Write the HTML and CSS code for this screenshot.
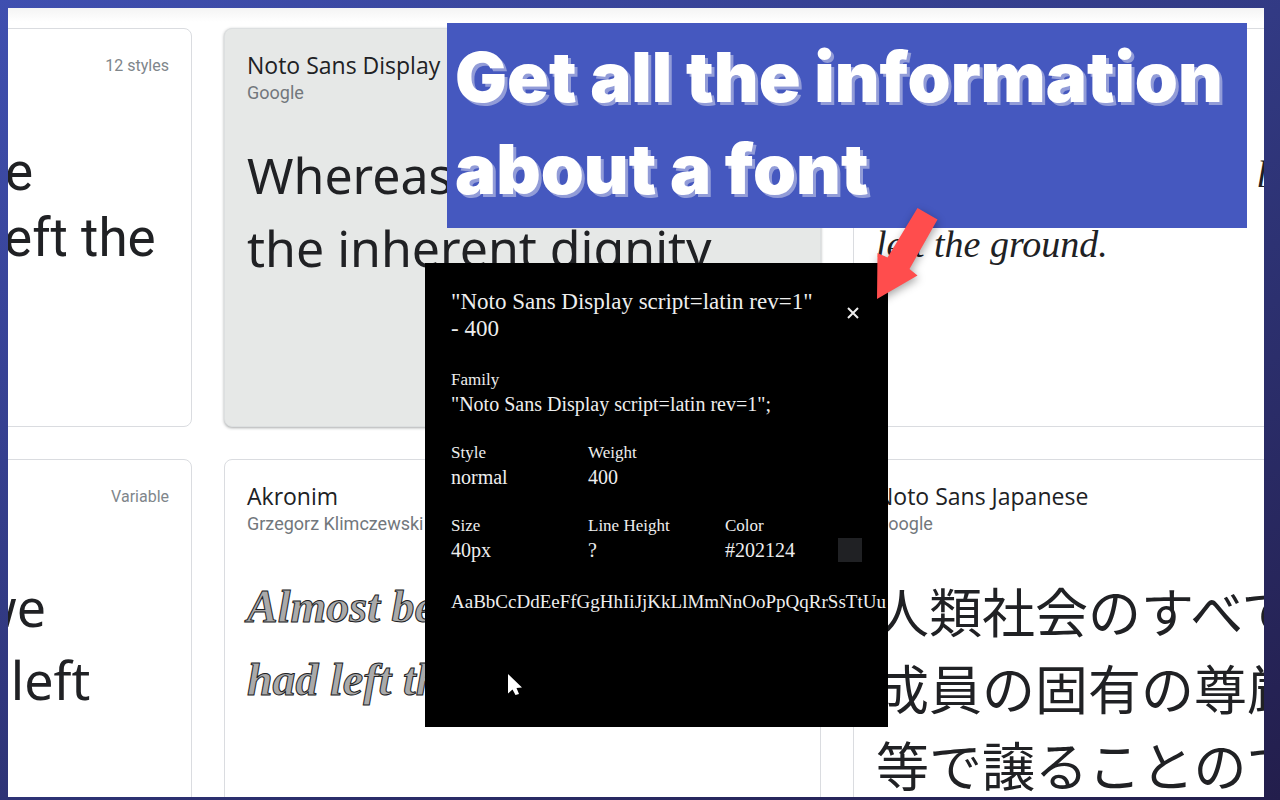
FILE: index.html
```html
<!DOCTYPE html>
<html lang="en">
<head>
<meta charset="utf-8">
<title>Get all the information about a font</title>
<link rel="stylesheet" href="styles.css">
</head>
<body>
<main class="frame">
  <div class="catalog">
    <article class="card card-left">
      <header class="card-head card-head-end"><span class="meta">12 styles</span></header>
      <p class="sample sample-roboto">Almost before we<br>knew it, we had left the</p>
    </article>
    <article class="card card-active">
      <header class="card-head"><h2 class="name">Noto Sans Display</h2><p class="maker">Google</p></header>
      <p class="sample sample-noto">Whereas<br>the inherent dignity</p>
    </article>
    <article class="card card-right">
      <header class="card-head"></header>
      <p class="sample sample-script"><span class="script-end">u l</span>left the ground.</p>
    </article>
    <article class="card card-left">
      <header class="card-head card-head-end"><span class="meta">Variable</span></header>
      <p class="sample sample-open">Almost before we<br>knew it, we had left</p>
    </article>
    <article class="card">
      <header class="card-head"><h2 class="name">Akronim</h2><p class="maker">Grzegorz Klimczewski</p></header>
      <p class="sample sample-akronim">Almost before<br>had left the</p>
    </article>
    <article class="card card-right">
      <header class="card-head"><h2 class="name">Noto Sans Japanese</h2><p class="maker">Google</p></header>
      <p class="sample sample-jp" lang="ja">人類社会のすべて<br>成員の固有の尊厳<br>等で譲ることので</p>
    </article>
  </div>
</main>

<h1 class="banner">Get all the information about a font</h1>

<section class="popup" aria-label="Font details">
  <header class="popup-head">
    <h2 class="popup-title">"Noto Sans Display script=latin rev=1" <span class="keep">- 400</span></h2>
    <button class="close" type="button" aria-label="Close">
      <svg width="12" height="12" viewBox="0 0 12 12"><path d="M1 1 11 11M11 1 1 11" stroke="#eee" stroke-width="2" fill="none"/></svg>
    </button>
  </header>
  <dl class="facts">
    <div class="fact fact-wide"><dt>Family</dt><dd>"Noto Sans Display script=latin rev=1";</dd></div>
    <div class="fact"><dt>Style</dt><dd>normal</dd></div>
    <div class="fact"><dt>Weight</dt><dd>400</dd></div>
    <div class="fact fact-first"><dt>Size</dt><dd>40px</dd></div>
    <div class="fact"><dt>Line Height</dt><dd>?</dd></div>
    <div class="fact"><dt>Color</dt><dd class="color">#202124<span class="swatch"></span></dd></div>
  </dl>
  <p class="alphabet">AaBbCcDdEeFfGgHhIiJjKkLlMmNnOoPpQqRrSsTtUu</p>
</section>

<svg class="arrow" width="90" height="110" viewBox="0 0 90 110" aria-hidden="true">
  <path d="M57.500 8 77.500 19.500 49.500 69 57.500 75.500 17 99 17.500 53 27.500 57.500Z" fill="#ff4d4d"/>
</svg>
<svg class="cursor" width="16" height="24" viewBox="0 0 16 24" aria-hidden="true">
  <path d="M1 1V20.500L5.500 16.500 8.500 22 12 21 9.500 15 15 14.500Z" fill="#fff"/>
</svg>
</body>
</html>
```

FILE: styles.css
```css
* { box-sizing: border-box; }
html, body { height: 100%; }
body {
  margin: 0;
  overflow: hidden;
  position: relative;
  font-family: Roboto, "Liberation Sans", sans-serif;
  color: #202124;
  background: linear-gradient(155deg, #3f4fb0 0%, #2d3273 60%, #231e4c 100%);
}
h1, h2, p, dl, dd { margin: 0; font-weight: 400; }

.frame { height: 100%; padding: 8px 16px 3px 8px; }
.catalog {
  height: 100%;
  overflow: hidden;
  padding-top: 20px;
  background: linear-gradient(#f4f4f4, #fff 14px);
  display: grid;
  grid-template-columns: minmax(0, 184fr) minmax(0, 597fr) minmax(0, 411fr);
  grid-auto-rows: 399px;
  gap: 32px;
}
.card {
  min-width: 0;
  padding: 20px 22px;
  border: 1px solid #dadce0;
  border-radius: 8px;
  background: #fff;
}
.card-left { width: 597px; justify-self: end; }
.card-right { width: 597px; }
.card-active {
  background: #e6e8e7;
  border-color: #dcdfe0;
  box-shadow: 0 1px 3px rgba(60, 64, 67, .45);
}
.card-head { height: 90px; }
.card-head-end { text-align: right; }
.meta { font-size: 16px; line-height: 34px; color: #80868b; }
.name { font-family: "Open Sans", sans-serif; font-size: 23px; line-height: 32px; }
.maker { font-size: 18px; line-height: 24px; color: #72777c; }

.sample { white-space: nowrap; font-size: 53px; line-height: 73px; }
.sample-roboto { line-height: 66px; }
.sample-noto { font-family: "Noto Sans", sans-serif; font-size: 50px; }
.sample-open { font-family: "Noto Sans", sans-serif; font-size: 52px; }
.sample-script { font-family: "Liberation Serif", serif; font-style: italic; font-size: 38px; line-height: 70px; }
.script-end { display: block; padding-left: 352px; }
.sample-akronim {
  font-family: "Liberation Serif", serif;
  font-style: italic;
  font-weight: 700;
  font-size: 46px;
  color: #aaa;
  -webkit-text-stroke: 1px #202124;
}
.sample-jp { padding-top: 2px; font-family: "Noto Sans CJK JP", sans-serif; line-height: 77px; }

.banner {
  position: absolute;
  left: 447px;
  top: 23px;
  width: 800px;
  padding: 8px 8px 13px;
  background: #4558bf;
  color: #fff;
  font-family: Inter, sans-serif;
  font-weight: 900;
  font-size: 69px;
  line-height: 92px;
  text-shadow: 3px 3px 0 #929cd8;
}

.popup {
  position: absolute;
  left: 425px;
  top: 263px;
  width: 463px;
  height: 464px;
  padding: 25px 26px;
  overflow: hidden;
  background: #000;
  color: #eee;
  font-family: "Liberation Serif", serif;
}
.popup-head { display: flex; justify-content: space-between; align-items: flex-start; }
.popup-title { width: 380px; font-size: 23px; line-height: 27px; }
.keep { white-space: nowrap; }
.close { margin-top: 18px; padding: 0; width: 18px; height: 14px; border: 0; background: none; line-height: 0; }
.facts {
  display: grid;
  grid-template-columns: repeat(3, 137px);
  row-gap: 25px;
  margin-top: 26px;
}
.fact-wide { grid-column: 1 / -1; }
.fact-first { grid-column: 1; }
.fact dt { font-size: 17px; line-height: 24px; }
.fact dd { font-size: 20px; line-height: 24px; }
.color { display: flex; justify-content: space-between; }
.swatch { width: 24px; height: 24px; background: #202124; }
.alphabet { margin-top: 27px; font-size: 19px; line-height: 26px; }

.arrow { position: absolute; left: 860px; top: 200px; filter: drop-shadow(1px 3px 4px rgba(0, 0, 0, .35)); }
.cursor { position: absolute; left: 507px; top: 673px; }
```
